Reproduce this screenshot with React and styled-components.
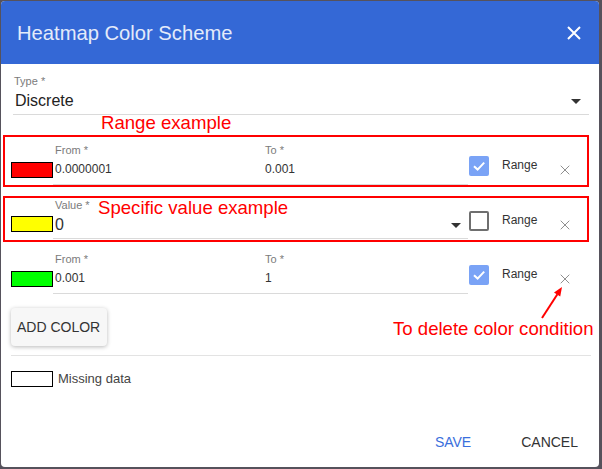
import React from "react";
import styled, { createGlobalStyle } from "styled-components";

const rows = [
  { color: "#ff0000", kind: "range", from: "0.0000001", to: "0.001", checked: true, marked: true },
  { color: "#ffff00", kind: "value", value: "0", checked: false, marked: true },
  { color: "#00ff00", kind: "range", from: "0.001", to: "1", checked: true },
];

const CloseIcon = ({ size = 14, color = "#fff", width = 2 }) => (
  <svg width={size} height={size} viewBox="0 0 14 14">
    <path d="M1 1L13 13M13 1L1 13" stroke={color} strokeWidth={width} fill="none" />
  </svg>
);

const CheckMark = () => (
  <svg width="14" height="14" viewBox="0 0 14 14">
    <path d="M2 7.2L5.6 10.6L12.2 3.6" stroke="#fff" strokeWidth="2" fill="none" />
  </svg>
);

const DeleteArrow = () => (
  <ArrowSvg width="42" height="40" viewBox="0 0 42 40">
    <line x1="12" y1="35" x2="27.4" y2="11.2" stroke="#ff0000" strokeWidth="2" />
    <polygon points="32,4 24,9.6 30.2,13.6" fill="#ff0000" />
  </ArrowSvg>
);

export default function App() {
  return (
    <>
      <GlobalStyle />
      <Dialog>
        <Header>
          <Title>Heatmap Color Scheme</Title>
          <CloseIcon />
        </Header>

        <Content>
          <TypeField>
            <Label>Type *</Label>
            <SelectLine $pad={8}>
              <TypeValue>Discrete</TypeValue>
              <Caret />
            </SelectLine>
          </TypeField>

          {rows.map((r, i) => (
            <Row key={i} $marked={r.marked} $gap={[20, 9, 2][i]} $pb={i === 1 ? 1 : 0}>
              {i === 0 && <Note style={{ left: 96, top: -24 }}>Range example</Note>}
              {i === 1 && <Note style={{ left: 93, top: 0 }}>Specific value example</Note>}
              {i === 2 && (
                <>
                  <DeleteArrow />
                  <Note style={{ left: 388, top: 73 }}>To delete color condition</Note>
                </>
              )}
              <Swatch $color={r.color} />
              <FieldGroup $top={r.kind === "range" ? 7 : 1} $bottom={r.kind === "range" ? 7 : 3}>
                {r.kind === "range" ? (
                  <>
                    <Field $width={210}>
                      <Label>From *</Label>
                      <Value>{r.from}</Value>
                    </Field>
                    <Field>
                      <Label>To *</Label>
                      <Value>{r.to}</Value>
                    </Field>
                  </>
                ) : (
                  <Field>
                    <Label>Value *</Label>
                    <SelectLine $pad={7}>
                      <BigValue>{r.value}</BigValue>
                      <Caret />
                    </SelectLine>
                  </Field>
                )}
              </FieldGroup>
              <Controls $top={(r.kind === "range" ? 7 : 1) + 12}>
                <Checkbox $checked={r.checked}>{r.checked && <CheckMark />}</Checkbox>
                <RangeText>Range</RangeText>
                <RemoveButton>
                  <CloseIcon size={10} color="#8f8f8f" width={1.4} />
                </RemoveButton>
              </Controls>
            </Row>
          ))}

          <AddButton>ADD COLOR</AddButton>
          <Divider />
          <MissingRow>
            <Swatch $color="#ffffff" $flat />
            <MissingText>Missing data</MissingText>
          </MissingRow>
        </Content>

        <Footer>
          <TextButton $primary>SAVE</TextButton>
          <TextButton>CANCEL</TextButton>
        </Footer>
      </Dialog>
    </>
  );
}

const GlobalStyle = createGlobalStyle`
  html, body {
    margin: 0;
    padding: 0;
    background: #56525c;
    font-family: "Liberation Sans", Arial, sans-serif;
  }
`;
const Dialog = styled.div`
  margin: 1px 3px 2px 1px;
  width: 598px;
  height: 466px;
  background: #fff;
  border-radius: 4px;
  overflow: hidden;
  display: flex;
  flex-direction: column;
  box-sizing: border-box;
`;
const Header = styled.div`
  height: 63px;
  flex: 0 0 63px;
  background: #3468d6;
  display: flex;
  align-items: center;
  justify-content: space-between;
  padding: 0 18px 0 16px;
`;
const Title = styled.div`
  color: #e4ebfa;
  font-size: 20.2px;
  line-height: 24px;
`;
const Content = styled.div`
  display: flex;
  flex-direction: column;
  padding: 10px 10px 0 12px;
`;
const TypeField = styled.div`
  border-bottom: 1px solid #dadada;
  padding: 1px 0 3px 1px;
`;
const Label = styled.div`
  font-size: 11px;
  line-height: 13px;
  color: #7b7b7b;
`;
const SelectLine = styled.div`
  display: flex;
  align-items: center;
  justify-content: space-between;
  padding-right: ${(p) => p.$pad}px;
  margin-top: 3px;
`;
const TypeValue = styled.div`
  font-size: 16px;
  line-height: 20px;
  color: #222;
  padding-left: 1px;
`;
const Caret = styled.span`
  width: 0;
  height: 0;
  border-left: 5px solid transparent;
  border-right: 5px solid transparent;
  border-top: 5px solid #333;
`;
const Row = styled.div`
  position: relative;
  display: flex;
  align-items: flex-start;
  margin: ${(p) => p.$gap}px 0 0 -10px;
  border: 2px solid ${(p) => (p.$marked ? "#ff0000" : "transparent")};
  padding: 0 0 ${(p) => p.$pb}px 6px;
`;
const Note = styled.div`
  position: absolute;
  color: #ff0000;
  font-size: 18.6px;
  line-height: 20px;
  white-space: nowrap;
`;
const ArrowSvg = styled.svg`
  position: absolute;
  left: 525px;
  top: 37px;
`;
const Swatch = styled.div`
  width: 42px;
  height: 16px;
  flex: 0 0 42px;
  box-sizing: border-box;
  border: 1px solid #000;
  background: ${(p) => p.$color};
  align-self: ${(p) => (p.$flat ? "center" : "flex-end")};
  margin-bottom: ${(p) => (p.$flat ? 0 : 7)}px;
`;
const FieldGroup = styled.div`
  flex: 0 0 415px;
  display: flex;
  border-bottom: 1px solid #dadada;
  padding: ${(p) => p.$top}px 0 ${(p) => p.$bottom}px;
`;
const Field = styled.div`
  padding-left: 2px;
  width: ${(p) => (p.$width ? `${p.$width - 2}px` : "auto")};
  flex: ${(p) => (p.$width ? "0 0 auto" : "1")};
`;
const Value = styled.div`
  font-size: 12px;
  line-height: 16px;
  color: #333;
  margin-top: 4px;
`;
const BigValue = styled.div`
  font-size: 16px;
  line-height: 20px;
  color: #333;
`;
const Controls = styled.div`
  display: flex;
  align-items: flex-start;
  padding-top: ${(p) => p.$top}px;
  margin-left: 1px;
`;
const Checkbox = styled.div`
  width: 20px;
  height: 20px;
  box-sizing: border-box;
  border-radius: 2px;
  display: flex;
  align-items: center;
  justify-content: center;
  background: ${(p) => (p.$checked ? "#7aa3f6" : "#fff")};
  border: ${(p) => (p.$checked ? "none" : "2px solid #6f6f6f")};
`;
const RangeText = styled.div`
  margin: 2px 0 0 13px;
  font-size: 12px;
  line-height: 14px;
  color: #333;
`;
const RemoveButton = styled.div`
  margin: 9px 0 0 23px;
  width: 10px;
  height: 10px;
  display: flex;
`;
const AddButton = styled.div`
  align-self: flex-start;
  margin: 12px 0 0 -2px;
  height: 38px;
  padding: 0 7px 0 6px;
  display: flex;
  align-items: center;
  background: #f7f7f7;
  border-radius: 4px;
  box-shadow: 0 1px 4px rgba(0, 0, 0, 0.28);
  font-size: 14px;
  color: #333;
`;
const Divider = styled.div`
  margin: 9px -2px 0 -2px;
  height: 1px;
  background: #e3e3e3;
`;
const MissingRow = styled.div`
  display: flex;
  align-items: center;
  gap: 5px;
  margin: 15px 0 0 -2px;
`;
const MissingText = styled.div`
  font-size: 13px;
  line-height: 16px;
  color: #444;
`;
const Footer = styled.div`
  margin-top: auto;
  display: flex;
  justify-content: flex-end;
  gap: 26px;
  padding: 0 9px 9px 0;
`;
const TextButton = styled.div`
  padding: 8px 12px;
  font-size: 14px;
  line-height: 16px;
  color: ${(p) => (p.$primary ? "#3a6fdc" : "#333")};
`;
